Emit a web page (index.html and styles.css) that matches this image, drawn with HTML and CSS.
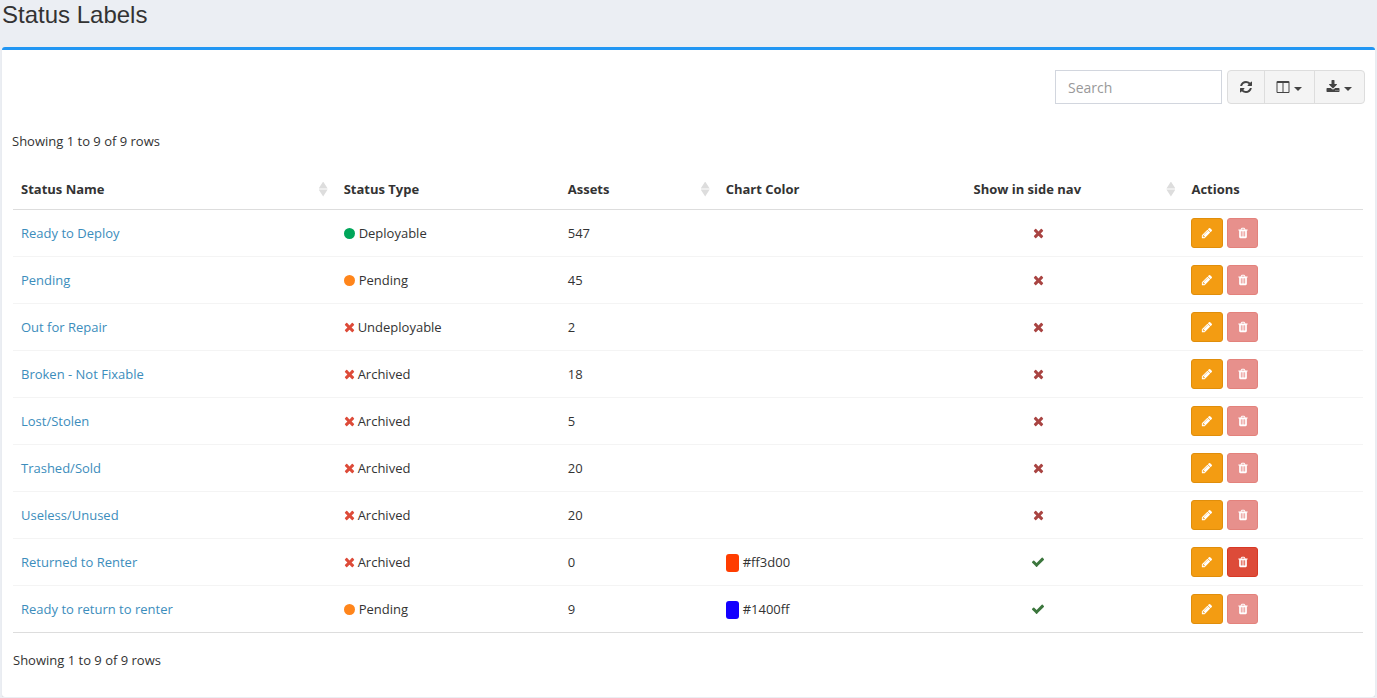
FILE: index.html
```html
<!DOCTYPE html>
<html lang="en">
<head>
    <meta charset="UTF-8">
    <meta name="viewport" content="width=device-width, initial-scale=1.0">
    <title>Status Labels</title>
    <link rel="stylesheet" href="styles.css">
</head>
<body>
    <svg class="icon-defs" aria-hidden="true">
        <symbol id="refresh" viewBox="0 0 1792 1792"><path d="M1639 1056q0 5-1 7-64 268-268 434.5t-478 166.5q-146 0-282.5-55t-243.5-157l-129 129q-19 19-45 19t-45-19-19-45v-448q0-26 19-45t45-19h448q26 0 45 19t19 45-19 45l-137 137q71 66 161 102t187 36q134 0 250-65t186-179q11-17 53-117 8-23 30-23h192q13 0 22.5 9.5t9.5 22.5zm25-800v448q0 26-19 45t-45 19h-448q-26 0-45-19t-19-45 19-45l138-138q-148-137-349-137-134 0-250 65t-186 179q-11 17-53 117-8 23-30 23h-199q-13 0-22.5-9.5t-9.5-22.5v-7q65-268 270-434.5t480-166.5q146 0 284 55.5t245 156.5l130-129q19-19 45-19t45 19 19 45z"/></symbol>
        <symbol id="columns" viewBox="0 0 1792 1792"><path d="M224 1536h608v-1152h-640v1120q0 13 9.5 22.5t22.5 9.5zm1376-32v-1120h-640v1152h608q13 0 22.5-9.5t9.5-22.5zm128-1216v1216q0 66-47 113t-113 47h-1344q-66 0-113-47t-47-113v-1216q0-66 47-113t113-47h1344q66 0 113 47t47 113z"/></symbol>
        <symbol id="download" viewBox="0 0 1792 1792"><path d="M1344 1344q0-26-19-45t-45-19-45 19-19 45 19 45 45 19 45-19 19-45zm256 0q0-26-19-45t-45-19-45 19-19 45 19 45 45 19 45-19 19-45zm128-224v320q0 40-28 68t-68 28h-1472q-40 0-68-28t-28-68v-320q0-40 28-68t68-28h465l135 136q58 56 136 56t136-56l136-136h464q40 0 68 28t28 68zm-325-569q17 41-14 70l-448 448q-18 19-45 19t-45-19l-448-448q-31-29-14-70 17-39 59-39h256v-448q0-26 19-45t45-19h256q26 0 45 19t19 45v448h256q42 0 59 39z"/></symbol>
        <symbol id="pencil" viewBox="0 0 1792 1792"><path d="M491 1536l91-91-235-235-91 91v107h128v128h107zm523-928q0-22-22-22-10 0-17 7l-542 542q-7 7-7 17 0 22 22 22 10 0 17-7l542-542q7-7 7-17zm-54-192l416 416-832 832h-416v-416zm683 96q0 53-37 90l-166 166-416-416 166-165q36-38 90-38 53 0 91 38l235 234q37 39 37 91z"/></symbol>
        <symbol id="trash" viewBox="0 0 1792 1792"><path d="M704 1376v-704q0-14-9-23t-23-9h-64q-14 0-23 9t-9 23v704q0 14 9 23t23 9h64q14 0 23-9t9-23zm256 0v-704q0-14-9-23t-23-9h-64q-14 0-23 9t-9 23v704q0 14 9 23t23 9h64q14 0 23-9t9-23zm256 0v-704q0-14-9-23t-23-9h-64q-14 0-23 9t-9 23v704q0 14 9 23t23 9h64q14 0 23-9t9-23zm-544-992h448l-48-117q-7-9-17-11h-317q-10 2-17 11zm928 32v64q0 14-9 23t-23 9h-96v948q0 83-47 143.5t-113 60.5h-832q-66 0-113-58.5t-47-141.5v-952h-96q-14 0-23-9t-9-23v-64q0-14 9-23t23-9h309l70-167q15-37 54-63t79-26h320q40 0 79 26t54 63l70 167h309q14 0 23 9t9 23z"/></symbol>
        <symbol id="times" viewBox="192 0 1408 1792"><path d="M1490 1322q0 40-28 68l-136 136q-28 28-68 28t-68-28l-294-294-294 294q-28 28-68 28t-68-28l-136-136q-28-28-28-68t28-68l294-294-294-294q-28-28-28-68t28-68l136-136q28-28 68-28t68 28l294 294 294-294q28-28 68-28t68 28l136 136q28 28 28 68t-28 68l-294 294 294 294q28 28 28 68z"/></symbol>
        <symbol id="check" viewBox="0 0 1792 1792"><path d="M1671 566q0 40-28 68l-724 724-136 136q-28 28-68 28t-68-28l-136-136-362-362q-28-28-28-68t28-68l136-136q28-28 68-28t68 28l294 295 656-657q28-28 68-28t68 28l136 136q28 28 28 68z"/></symbol>
    </svg>

    <h1 class="page-title">Status Labels</h1>

    <main class="box">
        <div class="toolbar">
            <input type="search" class="search" placeholder="Search" aria-label="Search">
            <div class="btn-group">
                <button type="button" class="btn-tool" aria-label="Refresh"><svg class="icon"><use href="#refresh"/></svg></button>
                <button type="button" class="btn-tool" aria-label="Columns"><svg class="icon"><use href="#columns"/></svg><span class="caret"></span></button>
                <button type="button" class="btn-tool" aria-label="Export"><svg class="icon"><use href="#download"/></svg><span class="caret"></span></button>
            </div>
        </div>
        <div class="pagination-detail">Showing 1 to 9 of 9 rows</div>

        <div class="table-wrap">
            <table class="table">
                <colgroup>
                    <col class="col-name">
                    <col class="col-type">
                    <col class="col-assets">
                    <col class="col-color">
                    <col class="col-nav">
                    <col class="col-actions">
                </colgroup>
                <thead>
                    <tr>
                        <th><button type="button" class="sort"><span class="sort-label">Status Name</span></button></th>
                        <th>Status Type</th>
                        <th><button type="button" class="sort"><span class="sort-label">Assets</span></button></th>
                        <th>Chart Color</th>
                        <th><button type="button" class="sort"><span class="sort-label center">Show in side nav</span></button></th>
                        <th>Actions</th>
                    </tr>
                </thead>
                <tbody>
                    <tr>
                        <td><a href="#">Ready to Deploy</a></td>
                        <td><span class="dot green"></span>Deployable</td>
                        <td>547</td>
                        <td></td>
                        <td class="center"><svg class="times text-danger"><use href="#times"/></svg></td>
                        <td>
                            <div class="actions">
                                <a href="#" class="btn btn-edit" aria-label="Edit"><svg class="icon-sm"><use href="#pencil"/></svg></a>
                                <button type="button" class="btn btn-delete" aria-label="Delete" disabled><svg class="icon-sm"><use href="#trash"/></svg></button>
                            </div>
                        </td>
                    </tr>
                    <tr>
                        <td><a href="#">Pending</a></td>
                        <td><span class="dot orange"></span>Pending</td>
                        <td>45</td>
                        <td></td>
                        <td class="center"><svg class="times text-danger"><use href="#times"/></svg></td>
                        <td>
                            <div class="actions">
                                <a href="#" class="btn btn-edit" aria-label="Edit"><svg class="icon-sm"><use href="#pencil"/></svg></a>
                                <button type="button" class="btn btn-delete" aria-label="Delete" disabled><svg class="icon-sm"><use href="#trash"/></svg></button>
                            </div>
                        </td>
                    </tr>
                    <tr>
                        <td><a href="#">Out for Repair</a></td>
                        <td><svg class="times text-red"><use href="#times"/></svg>Undeployable</td>
                        <td>2</td>
                        <td></td>
                        <td class="center"><svg class="times text-danger"><use href="#times"/></svg></td>
                        <td>
                            <div class="actions">
                                <a href="#" class="btn btn-edit" aria-label="Edit"><svg class="icon-sm"><use href="#pencil"/></svg></a>
                                <button type="button" class="btn btn-delete" aria-label="Delete" disabled><svg class="icon-sm"><use href="#trash"/></svg></button>
                            </div>
                        </td>
                    </tr>
                    <tr>
                        <td><a href="#">Broken - Not Fixable</a></td>
                        <td><svg class="times text-red"><use href="#times"/></svg>Archived</td>
                        <td>18</td>
                        <td></td>
                        <td class="center"><svg class="times text-danger"><use href="#times"/></svg></td>
                        <td>
                            <div class="actions">
                                <a href="#" class="btn btn-edit" aria-label="Edit"><svg class="icon-sm"><use href="#pencil"/></svg></a>
                                <button type="button" class="btn btn-delete" aria-label="Delete" disabled><svg class="icon-sm"><use href="#trash"/></svg></button>
                            </div>
                        </td>
                    </tr>
                    <tr>
                        <td><a href="#">Lost/Stolen</a></td>
                        <td><svg class="times text-red"><use href="#times"/></svg>Archived</td>
                        <td>5</td>
                        <td></td>
                        <td class="center"><svg class="times text-danger"><use href="#times"/></svg></td>
                        <td>
                            <div class="actions">
                                <a href="#" class="btn btn-edit" aria-label="Edit"><svg class="icon-sm"><use href="#pencil"/></svg></a>
                                <button type="button" class="btn btn-delete" aria-label="Delete" disabled><svg class="icon-sm"><use href="#trash"/></svg></button>
                            </div>
                        </td>
                    </tr>
                    <tr>
                        <td><a href="#">Trashed/Sold</a></td>
                        <td><svg class="times text-red"><use href="#times"/></svg>Archived</td>
                        <td>20</td>
                        <td></td>
                        <td class="center"><svg class="times text-danger"><use href="#times"/></svg></td>
                        <td>
                            <div class="actions">
                                <a href="#" class="btn btn-edit" aria-label="Edit"><svg class="icon-sm"><use href="#pencil"/></svg></a>
                                <button type="button" class="btn btn-delete" aria-label="Delete" disabled><svg class="icon-sm"><use href="#trash"/></svg></button>
                            </div>
                        </td>
                    </tr>
                    <tr>
                        <td><a href="#">Useless/Unused</a></td>
                        <td><svg class="times text-red"><use href="#times"/></svg>Archived</td>
                        <td>20</td>
                        <td></td>
                        <td class="center"><svg class="times text-danger"><use href="#times"/></svg></td>
                        <td>
                            <div class="actions">
                                <a href="#" class="btn btn-edit" aria-label="Edit"><svg class="icon-sm"><use href="#pencil"/></svg></a>
                                <button type="button" class="btn btn-delete" aria-label="Delete" disabled><svg class="icon-sm"><use href="#trash"/></svg></button>
                            </div>
                        </td>
                    </tr>
                    <tr>
                        <td><a href="#">Returned to Renter</a></td>
                        <td><svg class="times text-red"><use href="#times"/></svg>Archived</td>
                        <td>0</td>
                        <td><span class="swatch" style="background-color: #ff3d00"></span>#ff3d00</td>
                        <td class="center"><svg class="icon text-success"><use href="#check"/></svg></td>
                        <td>
                            <div class="actions">
                                <a href="#" class="btn btn-edit" aria-label="Edit"><svg class="icon-sm"><use href="#pencil"/></svg></a>
                                <button type="button" class="btn btn-delete" aria-label="Delete"><svg class="icon-sm"><use href="#trash"/></svg></button>
                            </div>
                        </td>
                    </tr>
                    <tr>
                        <td><a href="#">Ready to return to renter</a></td>
                        <td><span class="dot orange"></span>Pending</td>
                        <td>9</td>
                        <td><span class="swatch" style="background-color: #1400ff"></span>#1400ff</td>
                        <td class="center"><svg class="icon text-success"><use href="#check"/></svg></td>
                        <td>
                            <div class="actions">
                                <a href="#" class="btn btn-edit" aria-label="Edit"><svg class="icon-sm"><use href="#pencil"/></svg></a>
                                <button type="button" class="btn btn-delete" aria-label="Delete" disabled><svg class="icon-sm"><use href="#trash"/></svg></button>
                            </div>
                        </td>
                    </tr>
                </tbody>
            </table>
            <div class="pagination-detail">Showing 1 to 9 of 9 rows</div>
        </div>
    </main>
</body>
</html>
```
FILE: styles.css
```css
* {
    box-sizing: border-box;
}
body {
    margin: 0;
    padding: 0 2px;
    font-family: "Open Sans", "Noto Sans", sans-serif;
    font-size: 13px;
    line-height: 20px;
    color: #333;
    background-color: #ebeef3;
}
a {
    color: #3c8dbc;
    text-decoration: none;
}
button,
input {
    font: inherit;
    color: inherit;
}
svg {
    fill: currentColor;
    vertical-align: -2px;
}
.icon-defs {
    display: none;
}
.icon {
    width: 14px;
    height: 14px;
}
.icon-sm {
    width: 12px;
    height: 12px;
}
.page-title {
    margin: 0;
    padding-bottom: 17px;
    font-family: "Liberation Sans", Arial, sans-serif;
    font-size: 24px;
    font-weight: normal;
    line-height: 30px;
}
.box {
    padding: 20px 10px 27px;
    background-color: #fff;
    border-top: 3px solid #2196f3;
    border-radius: 3px;
    box-shadow: 0 1px 1px rgba(0, 0, 0, 0.1);
}

/* toolbar */
.toolbar {
    display: flex;
    justify-content: flex-end;
    gap: 5px;
    margin-bottom: 27px;
}
.search {
    width: 167px;
    height: 34px;
    margin: 0;
    padding: 6px 12px;
    font-size: 14px;
    background-color: #fff;
    border: 1px solid #d2d6de;
    border-radius: 0;
    appearance: none;
}
.search::placeholder {
    color: #999;
    opacity: 1;
}
.btn-group {
    display: flex;
}
.btn-tool {
    display: flex;
    align-items: center;
    gap: 4px;
    height: 34px;
    padding: 0 12px 0 11px;
    color: #444;
    background-color: #f4f4f4;
    border: 1px solid #ddd;
    cursor: pointer;
}
.btn-tool + .btn-tool {
    margin-left: -1px;
}
.btn-tool:first-child {
    padding: 0 11px;
    border-radius: 4px 0 0 4px;
}
.btn-tool:last-child {
    border-radius: 0 4px 4px 0;
}
.btn-tool:hover {
    background-color: #e7e7e7;
}
.caret {
    margin-top: 3px;
    border-top: 4px solid;
    border-right: 4px solid transparent;
    border-left: 4px solid transparent;
}

/* table */
.table-wrap {
    padding: 0 2px 0 1px;
}
.table {
    width: 100%;
    margin: 18px 0 17px;
    table-layout: fixed;
    border-collapse: separate;
    border-spacing: 0;
    border-bottom: 1px solid #ddd;
}
.col-name {
    width: 23.9%;
}
.col-type {
    width: 16.6%;
}
.col-assets {
    width: 11.7%;
}
.col-color {
    width: 13%;
}
.col-nav {
    width: 21.5%;
}
.table th {
    padding: 10px 8px;
    font-weight: bold;
    text-align: left;
    border-bottom: 1px solid #ddd;
}
.table td {
    height: 47px;
    padding: 8px;
    border-top: 1px solid #f4f4f4;
}
.table tbody tr:first-child td {
    height: 46px;
    border-top: 0;
}
.table .center {
    text-align: center;
}
.sort {
    display: flex;
    align-items: center;
    gap: 13px;
    width: 100%;
    padding: 0;
    font-weight: bold;
    text-align: left;
    background: none;
    border: 0;
    cursor: pointer;
}
.sort-label {
    flex: 1;
}
.sort::after {
    content: "";
    width: 9px;
    height: 15px;
    background-color: #ddd;
    clip-path: polygon(50% 0, 100% 47%, 0 47%, 0 53%, 100% 53%, 50% 100%, 0 53%, 0 47%);
}
.times {
    width: 11px;
    height: 14px;
    margin-right: 3px;
}
.center .times {
    margin-right: 0;
}
.dot {
    display: inline-block;
    width: 11px;
    height: 11px;
    margin-right: 4px;
    border-radius: 50%;
    vertical-align: -1px;
}
.green {
    background-color: #00a65a;
}
.orange {
    background-color: #ff851b;
}
.text-red {
    color: #dd4b39;
}
.text-danger {
    color: #a94442;
}
.text-success {
    color: #3c763d;
}
.swatch {
    display: inline-block;
    width: 13px;
    height: 18px;
    margin-right: 4px;
    border-radius: 3px;
    vertical-align: middle;
}
.actions {
    display: flex;
    gap: 4px;
}
.btn {
    display: flex;
    align-items: center;
    justify-content: center;
    width: 32px;
    height: 30px;
    padding: 0;
    color: #fff;
    border: 1px solid;
    border-radius: 3px;
    cursor: pointer;
}
.btn-edit {
    background-color: #f39c12;
    border-color: #e08e0b;
}
.btn-delete {
    width: 31px;
    background-color: #dd4b39;
    border-color: #d73925;
}
.btn-delete:disabled {
    color: #fff;
    background-color: #e7908c;
    border-color: #e3827c;
    cursor: not-allowed;
}
```
